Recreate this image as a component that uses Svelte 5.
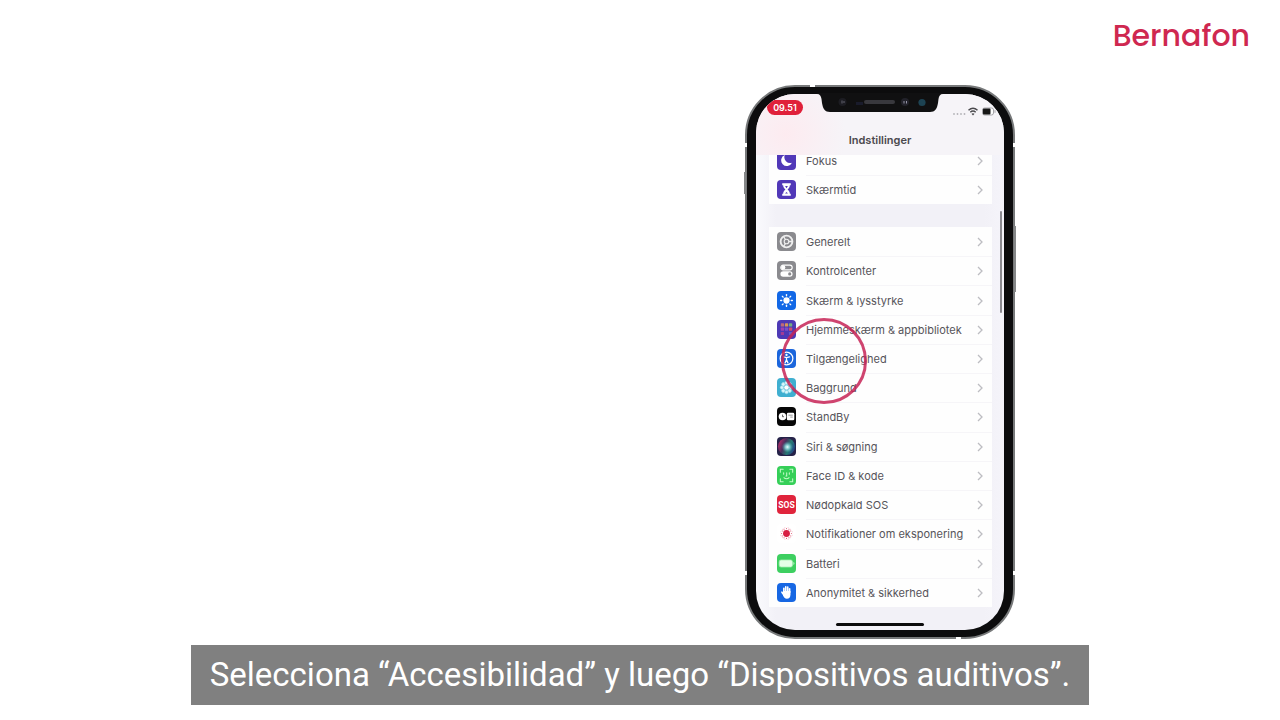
<!-- src/App.svelte -->
<script>
	const focusItems = [
		{ icon: "moon", label: "Fokus", color: "#5138b8" },
		{ icon: "hourglass", label: "Skærmtid", color: "#5138b8" },
	];

	const generalItems = [
		{ icon: "gear", label: "Generelt", color: "#8a8a8e" },
		{ icon: "switches", label: "Kontrolcenter", color: "#8a8a8e" },
		{ icon: "sun", label: "Skærm & lysstyrke", color: "#1268e6" },
		{ icon: "apps", label: "Hjemmeskærm & appbibliotek", color: "#4d39b5" },
		{ icon: "person", label: "Tilgængelighed", color: "#1b66dc" },
		{ icon: "flower", label: "Baggrund", color: "#3fafd0" },
		{ icon: "standby", label: "StandBy", color: "#060606" },
		{ icon: "siri", label: "Siri & søgning", color: "#252248" },
		{ icon: "face", label: "Face ID & kode", color: "#35cf58" },
		{ icon: "sos", label: "Nødopkald SOS", color: "#e0243c" },
		{ icon: "exposure", label: "Notifikationer om eksponering", color: "#ffffff" },
		{ icon: "battery", label: "Batteri", color: "#3dcf60" },
		{ icon: "hand", label: "Anonymitet & sikkerhed", color: "#1767e3" },
	];

	const rays = [0, 45, 90, 135, 180, 225, 270, 315];
	const dots = [0, 30, 60, 90, 120, 150, 180, 210, 240, 270, 300, 330];
</script>

{#snippet glyph(name)}
	<svg class="glyph" viewBox="0 0 20 20" aria-hidden="true">
		{#if name === "moon"}
			<path d="M8.2 4.2a6 6 0 1 0 7.6 8.2A6.2 6.2 0 0 1 8.2 4.2z" fill="#fff" />
		{:else if name === "hourglass"}
			<path d="M5.5 3.5h9v2h-1c0 2.4-1.2 3.4-2.4 4.5 1.2 1.1 2.4 2.1 2.4 4.5h1v2h-9v-2h1c0-2.4 1.2-3.4 2.4-4.5-1.2-1.1-2.4-2.1-2.4-4.5h-1z" fill="#fff" />
			<path d="M8.5 6.3h3L10 8.6zM8.5 14.3l1.5-1.8 1.5 1.8z" fill="#5138b8" />
		{:else if name === "gear"}
			<circle cx="10" cy="10" r="6.2" fill="none" stroke="#eee" stroke-width="2" />
			<circle cx="10" cy="10" r="2.4" fill="none" stroke="#eee" stroke-width="1.2" />
			<path d="M12.4 10h4M8.8 7.9 6.8 4.5M8.8 12.1l-2 3.4" stroke="#eee" stroke-width="1.4" />
		{:else if name === "switches"}
			<rect x="4" y="4.3" width="12" height="5" rx="2.5" fill="none" stroke="#fff" stroke-width="1.2" />
			<circle cx="6.6" cy="6.8" r="2.2" fill="#fff" />
			<rect x="3.6" y="10.7" width="12.8" height="5.8" rx="2.9" fill="#fff" />
			<circle cx="13.4" cy="13.6" r="1.7" fill="#8a8a8e" />
		{:else if name === "sun"}
			<circle cx="10" cy="10" r="3.3" fill="#fff" />
			{#each rays as angle}
				<path d="M10 3.8v1.2" transform="rotate({angle} 10 10)" stroke="#fff" stroke-width="1.4" stroke-linecap="round" />
			{/each}
		{:else if name === "apps"}
			<rect x="4" y="3.5" width="3.4" height="3.4" rx=".7" fill="#bf6a78" />
			<rect x="8.3" y="3.5" width="3.4" height="3.4" rx=".7" fill="#d79755" />
			<rect x="12.6" y="3.5" width="3.4" height="3.4" rx=".7" fill="#73ad81" />
			<rect x="4" y="8" width="3.4" height="3.4" rx=".7" fill="#a13fae" />
			<rect x="8.3" y="8" width="3.4" height="3.4" rx=".7" fill="#7a50c8" />
			<rect x="12.6" y="8" width="3.4" height="3.4" rx=".7" fill="#cd506d" />
			<rect x="4" y="12.5" width="3.4" height="3.4" rx=".7" fill="#a33c94" />
			<rect x="12.6" y="12.5" width="3.4" height="3.4" rx=".7" fill="#665cc4" />
		{:else if name === "person"}
			<circle cx="10" cy="10" r="6.7" fill="none" stroke="#fff" stroke-width="1.3" />
			<circle cx="10" cy="6.2" r="1.2" fill="#fff" />
			<path d="M6.8 8.4 10 9l3.2-.6M10 9v2.4m0 0-1.5 3.2M10 11.4l1.5 3.2" fill="none" stroke="#fff" stroke-width="1.3" stroke-linecap="round" />
		{:else if name === "flower"}
			{#each rays as angle}
				<circle cx="10" cy="5.2" r="1.9" transform="rotate({angle} 10 10)" fill="#d9f6fb" stroke="#8fd6e6" stroke-width=".6" />
			{/each}
			<circle cx="10" cy="10" r="2.4" fill="#fff" />
		{:else if name === "standby"}
			<circle cx="5.8" cy="10" r="4" fill="#fff" />
			<path d="M5.8 8v2.2h1.6" fill="none" stroke="#222" stroke-width=".7" />
			<rect x="10.4" y="6.1" width="7.8" height="7.8" rx="1.4" fill="#fff" />
			<path d="M12 8.6h4.6M14 10.6h2.6" stroke="#777" stroke-width=".8" />
		{:else if name === "siri"}
			<defs>
				<linearGradient id="siri-orb" x1="0" y1=".3" x2="1" y2=".7">
					<stop offset="0" stop-color="#b52d68" />
					<stop offset=".35" stop-color="#4a2f5c" />
					<stop offset=".65" stop-color="#267a72" />
					<stop offset="1" stop-color="#233f88" />
				</linearGradient>
				<radialGradient id="siri-glow">
					<stop offset="0" stop-color="#eaffff" />
					<stop offset=".4" stop-color="#8fdde0" stop-opacity=".8" />
					<stop offset="1" stop-color="#45a9ae" stop-opacity="0" />
				</radialGradient>
			</defs>
			<circle cx="10" cy="10" r="9" fill="url(#siri-orb)" />
			<circle cx="11" cy="10.5" r="6" fill="url(#siri-glow)" />
		{:else if name === "face"}
			<g fill="none" stroke="#c4fbc9" stroke-width="1.1" stroke-linecap="round">
				<path d="M3.5 6.5v-3h3M13.5 3.5h3v3M16.5 13.5v3h-3M6.5 16.5h-3v-3" />
				<path d="M7 7.2v1.4M13 7.2v1.4M10.2 7.2v3.3h-.8M7.3 12.3c1.5 1.6 3.9 1.6 5.4 0" />
			</g>
		{:else if name === "sos"}
			<text x="10" y="13.2" text-anchor="middle" fill="#fff" class="sos">SOS</text>
		{:else if name === "exposure"}
			<circle cx="10" cy="10" r="3.6" fill="#d81e43" />
			{#each dots as angle}
				<circle cx="10" cy="4.8" r=".6" transform="rotate({angle} 10 10)" fill="#e2617c" />
				<circle cx="10" cy="3.7" r=".4" transform="rotate({angle + 15} 10 10)" fill="#eb9aab" />
			{/each}
		{:else if name === "battery"}
			<rect x="2.3" y="6.3" width="14" height="7.4" rx="2" fill="#e4ffe6" stroke="#a7efb3" stroke-width=".8" />
			<path d="M17.4 8.5v3c1.2-.5 1.2-2.5 0-3z" fill="#e4ffe6" />
		{:else if name === "hand"}
			<g fill="none" stroke="#fff" stroke-width="1.7" stroke-linecap="round">
				<path d="M7.2 10V5.6M9.2 9V4M11.3 9V4.4M13.3 10V6" />
				<path d="M5.2 9.7 7.5 13" />
			</g>
			<path d="M6.4 8.5h7.8V12c0 2.8-1.5 4.5-3.8 4.5-2.2 0-3.2-1.2-4-3.3z" fill="#fff" />
		{/if}
	</svg>
{/snippet}

{#snippet row(item)}
	<li>
		<a href="#{item.icon}">
			<span class="icon" style="background: {item.color}">{@render glyph(item.icon)}</span>
			<span class="label">
				{item.label}
				<svg class="chevron" viewBox="0 0 6 10" aria-hidden="true">
					<path d="M1 1l4 4-4 4" fill="none" stroke="#bdbdc2" stroke-width="1.3" />
				</svg>
			</span>
		</a>
	</li>
{/snippet}

<main>
	<header>
		<div class="logo">Bernafon</div>
	</header>

	<section class="phone">
		<span class="side left"></span>
		<span class="side right"></span>
		<span class="band upper"></span>
		<span class="band lower"></span>
		<span class="seam top"></span>
		<span class="seam bottom"></span>

		<div class="screen">
			<div class="topbar">
				<div class="status">
					<span class="time">09.51</span>
					<svg class="signals" viewBox="0 0 44 12" aria-hidden="true">
						<g fill="#b4b3b8">
							<circle cx="2" cy="9" r=".9" />
							<circle cx="5.5" cy="9" r=".9" />
							<circle cx="9" cy="9" r=".9" />
							<circle cx="12.5" cy="9" r=".9" />
						</g>
						<g fill="none" stroke="#4a494d" stroke-width="1.5">
							<path d="M16.5 5.2c2.8-2.5 6.2-2.5 9 0M18.3 7.2c1.7-1.5 3.7-1.5 5.4 0" />
						</g>
						<path d="M19.5 8.8c1-.8 2-.8 3 0L21 10.4z" fill="#4a494d" />
						<rect x="30.5" y="3" width="11" height="7" rx="2" fill="#fff" stroke="#a6a5aa" />
						<rect x="31" y="3.5" width="7.5" height="6" rx="1" fill="#161616" />
						<path d="M43 5.2v2.6" stroke="#a6a5aa" />
					</svg>
				</div>
				<h1>Indstillinger</h1>
			</div>

			<nav class="list">
				<ul>
					{#each focusItems as item}
						{@render row(item)}
					{/each}
				</ul>
				<ul class="general">
					{#each generalItems as item}
						{@render row(item)}
					{/each}
				</ul>
			</nav>
			<span class="scrollbar"></span>
			<span class="home"></span>
		</div>

		<svg class="notch" viewBox="0 0 126 20" aria-hidden="true">
			<path d="M0 0h126v1c-3 0-4 2-4.5 5l-.5 4c-1 6-3 9-8 9H13c-5 0-7-3-8-9l-.5-4C4 3 3 1 0 1z" fill="#101011" />
			<rect x="47" y="7" width="31" height="4" rx="2" fill="#38383d" />
			<rect x="39" y="9" width="7" height="3" fill="#191b2b" />
			<circle cx="25.5" cy="9" r="4" fill="#1c1c22" />
			<path d="M25 7.5v3M27 8v2" stroke="#777783" stroke-width=".8" />
			<circle cx="88" cy="9" r="4" fill="#22222a" />
			<path d="M87 8v2.5M89.5 8v2.5" stroke="#9393a6" />
			<circle cx="105" cy="9.5" r="3.6" fill="#1d4353" />
		</svg>
		<span class="tap"></span>
	</section>

	<p class="caption">Selecciona “Accesibilidad” y luego “Dispositivos auditivos”.</p>
</main>

<style>
	:global(body) {
		margin: 0;
		background: #fff;
	}

	main {
		display: flex;
		flex-direction: column;
		min-height: 100vh;
		font-family: Inter, "Liberation Sans", sans-serif;
	}

	header {
		display: flex;
		justify-content: flex-end;
		box-sizing: border-box;
		height: 85px;
		padding: 16px 30px;
	}

	.logo {
		color: #cf2850;
		font-family: Poppins, Inter, sans-serif;
		font-size: 30px;
		font-weight: 500;
		line-height: 40px;
	}

	.phone {
		position: relative;
		align-self: flex-end;
		display: flex;
		box-sizing: border-box;
		width: 270px;
		height: 554px;
		margin-right: 265px;
		padding: 7px 9px;
		border: 2px solid #77797a;
		border-radius: 50px;
		background: #0c0c0d;
	}

	.screen {
		position: relative;
		display: flex;
		flex: 1;
		flex-direction: column;
		min-width: 0;
		overflow: hidden;
		border-radius: 39px;
		background: linear-gradient(90deg, #fafafd, #f2f1f7 20px, #f2f1f7 228px, #f5f4fa);
	}

	.topbar {
		flex: none;
		height: 61px;
		background: radial-gradient(circle at 30px 40px, #fdebf0, #f6f4f8 60px);
	}

	.status {
		display: flex;
		justify-content: space-between;
		padding: 6px 8px 0 11px;
	}

	.time {
		width: 36px;
		height: 15px;
		border-radius: 8px;
		background: #e0203a;
		color: #fff;
		font-size: 9px;
		font-weight: 600;
		line-height: 15px;
		text-align: center;
	}

	.signals {
		width: 44px;
		height: 12px;
		margin-top: 5px;
	}

	h1 {
		margin: 15px 0 0;
		color: #4b494e;
		font-size: 11px;
		font-weight: 600;
		line-height: 16px;
		text-align: center;
	}

	.list {
		display: flex;
		flex: 1;
		flex-direction: column;
		justify-content: flex-end;
		gap: 23px;
		min-height: 0;
		overflow: hidden;
		padding: 0 12px 23px 13px;
	}

	ul {
		display: grid;
		flex: none;
		grid-auto-rows: 1fr;
		margin: 0;
		padding: 0;
		background: #fefefe;
		list-style: none;
	}

	.general {
		min-height: 380px;
	}

	a {
		display: flex;
		align-items: center;
		gap: 10px;
		height: 100%;
		min-height: 29px;
		padding-left: 8px;
		color: #56545a;
		font-size: 11px;
		text-decoration: none;
	}

	.icon {
		display: flex;
		width: 19px;
		height: 19px;
		border-radius: 4px;
	}

	.glyph {
		width: 100%;
	}

	.sos {
		font-family: Roboto, sans-serif;
		font-size: 9px;
		font-weight: 700;
	}

	.label {
		display: flex;
		flex: 1;
		align-items: center;
		justify-content: space-between;
		align-self: stretch;
		padding-right: 9px;
		white-space: nowrap;
	}

	li + li .label {
		border-top: 1px solid #f6f5f8;
	}

	.chevron {
		width: 6px;
		height: 10px;
	}

	.scrollbar {
		position: absolute;
		top: 117px;
		right: 2px;
		width: 2px;
		height: 102px;
		border-radius: 1px;
		background: #8b8a90;
	}

	.home {
		position: absolute;
		bottom: 4px;
		left: 50%;
		width: 88px;
		height: 3px;
		margin-left: -44px;
		border-radius: 2px;
		background: #0b0b0c;
	}

	.notch {
		position: absolute;
		top: 6px;
		left: 70px;
		width: 126px;
		height: 20px;
	}

	.tap {
		position: absolute;
		top: 231px;
		left: 34px;
		box-sizing: border-box;
		width: 86px;
		height: 86px;
		border: 3px solid rgba(199, 35, 86, 0.85);
		border-radius: 50%;
	}

	.side {
		position: absolute;
		width: 2px;
		background: #858788;
	}

	.side.left {
		top: 85px;
		left: -3px;
		height: 22px;
	}

	.side.right {
		top: 139px;
		right: -3px;
		height: 66px;
	}

	.band {
		position: absolute;
		right: -2px;
		left: -2px;
		box-sizing: border-box;
		height: 4px;
		border: solid #fff;
		border-width: 0 2px;
	}

	.band.upper {
		top: 56px;
	}

	.band.lower {
		bottom: 62px;
	}

	.seam {
		position: absolute;
		width: 5px;
		height: 2px;
		background: #fff;
	}

	.seam.top {
		top: -2px;
		left: 63px;
	}

	.seam.bottom {
		bottom: -2px;
		left: 209px;
	}

	.caption {
		align-self: center;
		margin: 6px 0 15px;
		padding: 0 19px;
		background: #808080;
		color: #fff;
		font-family: Roboto, sans-serif;
		font-size: 33px;
		line-height: 60px;
	}
</style>
